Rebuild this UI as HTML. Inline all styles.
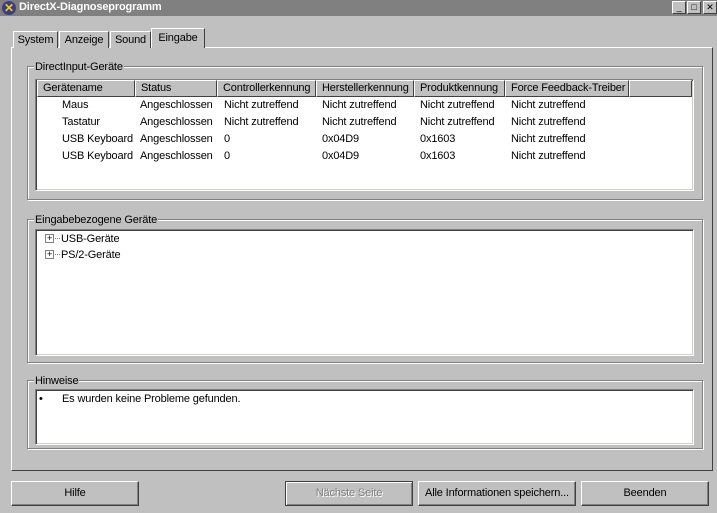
<!DOCTYPE html>
<html><head><meta charset="utf-8"><style>
*{box-sizing:border-box;margin:0;padding:0}
body{width:717px;height:513px;background:#c0c0c0;font-family:"Liberation Sans",sans-serif;font-size:11px;letter-spacing:-0.15px;color:#000;position:relative;overflow:hidden}
.a{position:absolute}
.title{left:0;top:0;width:717px;height:16px;background:#808080;color:#fff;font-weight:bold;font-size:11px;line-height:15px;padding-left:19px}
.ico{left:2px;top:1px;width:14px;height:14px;border-radius:7px;background:#3b3b8b;color:#f0d000;font-size:12px;line-height:14px;text-align:center;font-weight:bold}
.tb{top:1px;width:14px;height:13px;background:#c0c0c0;border:1px solid;border-color:#fff #404040 #404040 #fff;color:#000;font-size:9px;line-height:11px;text-align:center}
.tab{top:31px;height:17px;border:1px solid;border-bottom:none;border-color:#fff #404040 #404040 #fff;line-height:17px;text-align:center;background:#c0c0c0}
.panel{left:11px;top:47px;width:702px;height:424px;border:1px solid;border-color:#fff #404040 #404040 #fff}
.grp{border:1px solid #808080;box-shadow:1px 1px 0 #fff inset,1px 1px 0 #fff}
.lg{background:#c0c0c0;padding:0 1px;line-height:12px}
.box{background:#fff;border:1px solid;border-color:#808080 #fff #fff #808080;box-shadow:inset 1px 1px 0 #404040,inset -1px -1px 0 #d4d0c8}
.hd{top:80px;height:17px;background:#c0c0c0;border:1px solid;border-color:#fff #404040 #404040 #fff;padding-left:5px;line-height:15px;white-space:nowrap;overflow:hidden}
.c{white-space:nowrap;line-height:17px}
.btn{top:481px;height:25px;border:1px solid;border-color:#fff #404040 #404040 #fff;box-shadow:inset -1px -1px 0 #808080;text-align:center;line-height:22px}
</style></head><body>
<div class="a title">DirectX-Diagnoseprogramm</div>
<div class="a ico">✕</div>
<div class="a tb" style="left:672px">_</div>
<div class="a tb" style="left:687px">□</div>
<div class="a tb" style="left:703px">✕</div>

<div class="a panel"></div>
<div class="a tab" style="left:13px;width:45px">System</div>
<div class="a tab" style="left:59px;width:50px">Anzeige</div>
<div class="a tab" style="left:110px;width:41px">Sound</div>
<div class="a tab" style="left:151px;top:28px;height:20px;width:54px;line-height:18px;border-bottom:none;z-index:2">Eingabe</div>

<div class="a grp" style="left:27px;top:66px;width:676px;height:134px"></div>
<div class="a lg" style="left:34px;top:61px">DirectInput-Geräte</div>
<div class="a box" style="left:35px;top:79px;width:659px;height:112px"></div>
<div class="a hd" style="left:37px;width:98px">Gerätename</div>
<div class="a hd" style="left:135px;width:82px">Status</div>
<div class="a hd" style="left:217px;width:99px">Controllerkennung</div>
<div class="a hd" style="left:316px;width:98px">Herstellerkennung</div>
<div class="a hd" style="left:414px;width:91px">Produktkennung</div>
<div class="a hd" style="left:505px;width:124px">Force Feedback-Treiber</div>
<div class="a hd" style="left:629px;width:63px"></div>

<div class="a c" style="left:62px;top:97px">Maus<br>Tastatur<br>USB Keyboard<br>USB Keyboard</div>
<div class="a c" style="left:140px;top:97px">Angeschlossen<br>Angeschlossen<br>Angeschlossen<br>Angeschlossen</div>
<div class="a c" style="left:224px;top:97px">Nicht zutreffend<br>Nicht zutreffend<br>0<br>0</div>
<div class="a c" style="left:322px;top:97px">Nicht zutreffend<br>Nicht zutreffend<br>0x04D9<br>0x04D9</div>
<div class="a c" style="left:420px;top:97px">Nicht zutreffend<br>Nicht zutreffend<br>0x1603<br>0x1603</div>
<div class="a c" style="left:511px;top:97px">Nicht zutreffend<br>Nicht zutreffend<br>Nicht zutreffend<br>Nicht zutreffend</div>

<div class="a grp" style="left:27px;top:219px;width:676px;height:144px"></div>
<div class="a lg" style="left:34px;top:214px">Eingabebezogene Geräte</div>
<div class="a box" style="left:35px;top:229px;width:659px;height:127px"></div>
<div class="a" style="left:45px;top:234px;width:9px;height:9px;border:1px solid #808080;background:#fff;font-size:9px;line-height:7px;text-align:center">+</div>
<div class="a" style="left:45px;top:250px;width:9px;height:9px;border:1px solid #808080;background:#fff;font-size:9px;line-height:7px;text-align:center">+</div>
<div class="a" style="left:55px;top:238px;width:5px;border-top:1px dotted #808080"></div>
<div class="a" style="left:55px;top:254px;width:5px;border-top:1px dotted #808080"></div>
<div class="a c" style="left:61px;top:231px;line-height:16px">USB-Geräte<br>PS/2-Geräte</div>

<div class="a grp" style="left:27px;top:380px;width:676px;height:69px"></div>
<div class="a lg" style="left:34px;top:375px">Hinweise</div>
<div class="a box" style="left:35px;top:389px;width:659px;height:56px"></div>
<div class="a c" style="left:39px;top:392px;line-height:15px">•</div>
<div class="a c" style="left:62px;top:392px;line-height:15px">Es wurden keine Probleme gefunden.</div>

<div class="a btn" style="left:11px;width:128px">Hilfe</div>
<div class="a btn" style="left:285px;width:128px;color:#808080;text-shadow:1px 1px 0 #fff;border-color:#404040;box-shadow:inset 1px 1px 0 #fff,inset -1px -1px 0 #808080">Nächste Seite</div>
<div class="a btn" style="left:418px;width:158px">Alle Informationen speichern...</div>
<div class="a btn" style="left:581px;width:128px">Beenden</div>
</body></html>
